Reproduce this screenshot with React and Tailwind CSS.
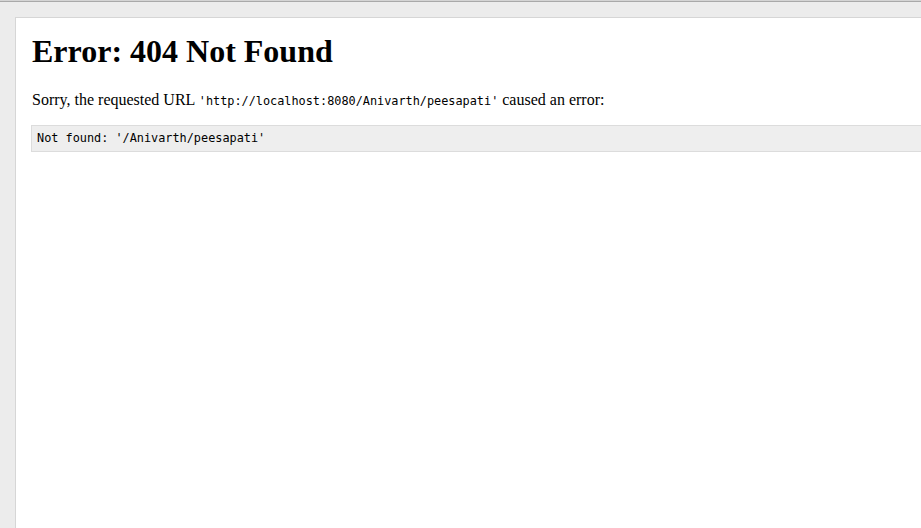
export default function App() {
  return (
    <div className="w-[921px] h-[528px] overflow-hidden bg-[#ececec] relative">
      <div className="h-[1px] bg-[#d4d4d4]" />
      <div className="h-[1px] bg-[#a9a9a9]" />
      <div className="pt-[15px] pl-[15px]">
        <div className="w-[1000px] h-[600px] bg-white border-t border-l border-[#d6d6d6] pt-[15px] pl-[16px]">
          <h1 className="m-0 text-[32px] leading-[36px] font-bold text-black" style={{ fontFamily: '"Liberation Serif", serif' }}>
            Error: 404 Not Found
          </h1>
          <p className="mt-[21px] text-[16px] leading-[20px] text-black" style={{ fontFamily: '"Liberation Serif", serif' }}>
            Sorry, the requested URL{' '}
            <tt className="text-[11.85px]" style={{ fontFamily: '"DejaVu Sans Mono", monospace' }}>'http://localhost:8080/Anivarth/peesapati'</tt>{' '}
            caused an error:
          </p>
          <pre className="mt-[14px] -ml-[1px] h-[27px] bg-[#eeeeee] border border-[#dcdcdc] pl-[5px] pt-[5px] text-[11.85px] leading-[14px] text-black" style={{ fontFamily: '"DejaVu Sans Mono", monospace' }}>
Not found: '/Anivarth/peesapati'</pre>
        </div>
      </div>
    </div>
  );
}
